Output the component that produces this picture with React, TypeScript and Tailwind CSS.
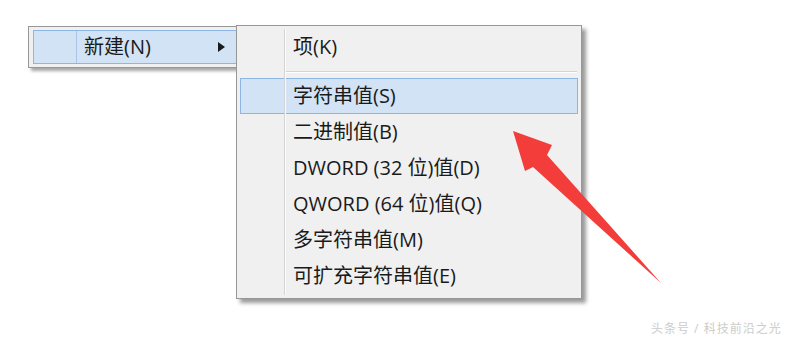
import React from 'react';

const subItems = [
  '二进制值(B)',
  'DWORD (32 位)值(D)',
  'QWORD (64 位)值(Q)',
  '多字符串值(M)',
  '可扩充字符串值(E)',
];

function MenuItem({ label, active = false }: { label: string; active?: boolean }) {
  return (
    <div
      className={
        active
          ? 'flex h-[36px] items-center border border-[#8db6e4] bg-[#d1e3f5] pl-[52px]'
          : 'flex h-[36px] items-center pl-[53px]'
      }
    >
      {label}
    </div>
  );
}

export default function App() {
  return (
    <div
      className="relative h-[342px] w-[787px] overflow-hidden bg-white text-[20px] text-[#1a1a1a]"
      style={{ fontFamily: '"Open Sans", "Noto Sans CJK SC", sans-serif' }}
    >
      {/* Parent menu */}
      <div className="absolute left-[28px] top-[26px] h-[42px] w-[216px] border border-[#979797] bg-[#f0f0f0] p-[3px] pl-[4px] shadow-[3px_3px_3px_rgba(0,0,0,0.35)]">
        <div className="flex h-full items-center border border-[#8db6e4] bg-[#d1e3f5]">
          <div className="w-[43px] self-stretch border-r border-[#aac5e3]" />
          <span className="ml-[7px]">新建(N)</span>
          <svg className="ml-auto mr-[14px]" width="7" height="10" viewBox="0 0 7 10">
            <path d="M0 0 L7 5 L0 10 Z" fill="#1a1a1a" />
          </svg>
        </div>
      </div>

      {/* Sub menu */}
      <div className="absolute left-[236px] top-[25px] h-[274px] w-[346px] border border-[#979797] bg-[#f0f0f0] p-[3px] shadow-[4px_4px_4px_rgba(0,0,0,0.4)]">
        <div className="pointer-events-none absolute bottom-[3px] left-[47px] top-[3px] flex">
          <div className="w-px bg-[#d4d4d4]" />
          <div className="w-px bg-white/80" />
        </div>
        <MenuItem label="项(K)" />
        <div className="flex h-[13px] flex-col justify-center pl-[45px] pr-[1px]">
          <div className="h-px bg-[#d4d4d4]" />
          <div className="h-px bg-white" />
        </div>
        <MenuItem label="字符串值(S)" active />
        {subItems.map((label) => (
          <MenuItem key={label} label={label} />
        ))}
      </div>

      {/* Red pointer arrow */}
      <svg className="pointer-events-none absolute left-0 top-0" width="787" height="342" viewBox="0 0 787 342">
        <polygon
          points="513,131 552,145 547,155 661,283 533,167 525,171"
          fill="#f23d3a"
        />
      </svg>

      {/* Watermark */}
      <div className="absolute left-[651px] top-[320px] whitespace-nowrap text-[12px] tracking-[1px] text-[#cccccc]">
        头条号 / 科技前沿之光
      </div>
    </div>
  );
}
